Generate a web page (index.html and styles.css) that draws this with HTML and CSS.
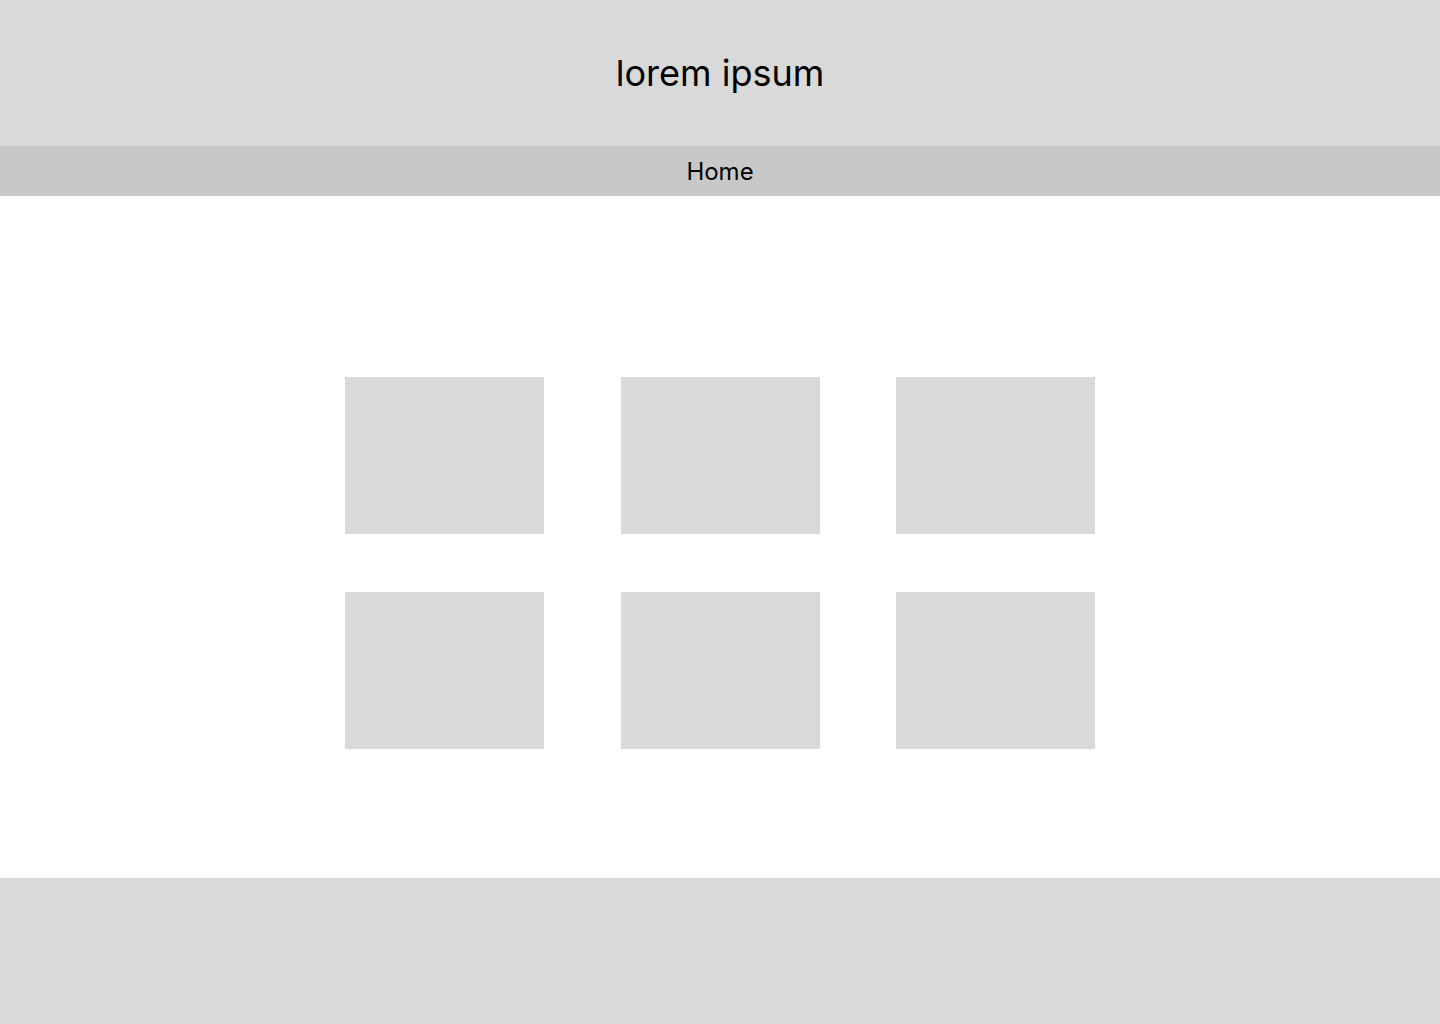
FILE: index.html
```html
<!DOCTYPE html>
<html lang="en">
<head>
    <meta charset="UTF-8">
    <meta name="viewport" content="width=device-width, initial-scale=1.0">
    <title>lorem ipsum</title>
    <link rel="stylesheet" href="styles.css">
</head>
<body>
    <header class="site-header">
        <h1>lorem ipsum</h1>
    </header>

    <nav class="site-nav">
        <a href="#">Home</a>
    </nav>

    <main class="content">
        <div class="tile-grid">
            <div class="tile"></div>
            <div class="tile"></div>
            <div class="tile"></div>
            <div class="tile"></div>
            <div class="tile"></div>
            <div class="tile"></div>
        </div>
    </main>

    <footer class="site-footer"></footer>
</body>
</html>
```

FILE: styles.css
```css
* {
    margin: 0;
    padding: 0;
    box-sizing: border-box;
}

body {
    font-family: Inter, 'Noto Sans', sans-serif;
    background: white;
    color: #000;
    min-height: 100vh;
    display: flex;
    flex-direction: column;
}

.site-header {
    height: 146px;
    background: #d9d9d9;
    display: flex;
    align-items: center;
    justify-content: center;
}

.site-header h1 {
    font-size: 36px;
    font-weight: 400;
}

.site-nav {
    height: 50px;
    background: #c8c8c8;
    display: flex;
    align-items: center;
    justify-content: center;
}

.site-nav a {
    font-size: 24px;
    color: #000;
    text-decoration: none;
}

.content {
    height: 682px;
    padding-top: 181px;
    display: flex;
    justify-content: center;
}

.tile-grid {
    display: grid;
    grid-template-columns: repeat(3, 199px);
    grid-auto-rows: 157px;
    column-gap: 76.5px;
    row-gap: 58px;
    align-content: start;
}

.tile {
    background: #d9d9d9;
}

.site-footer {
    height: 146px;
    background: #d9d9d9;
}
```
